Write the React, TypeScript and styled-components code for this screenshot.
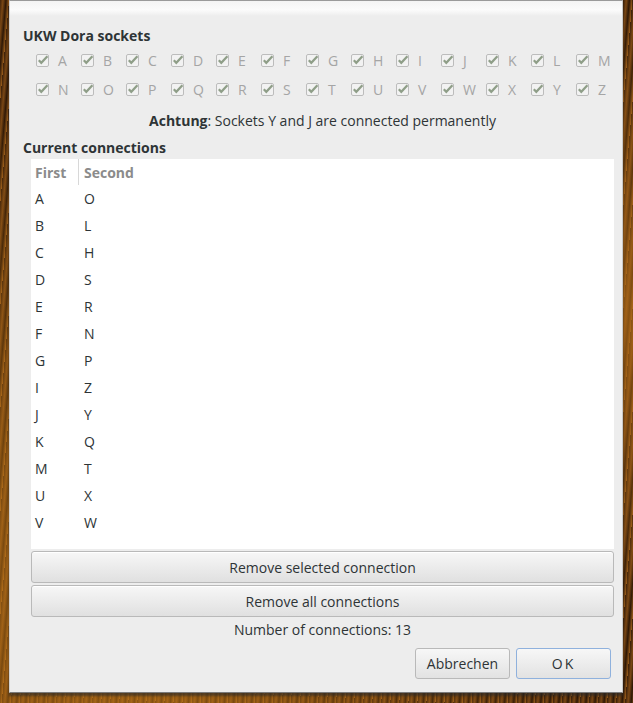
import { createGlobalStyle, styled } from "styled-components";

const GlobalStyle = createGlobalStyle`
    html, body {
        margin: 0;
        padding: 0;
    }
    body {
        font-family: "Open Sans", "DejaVu Sans", sans-serif;
        font-size: 14px;
        color: #2e3436;
    }
`;

const Desktop = styled.div`
    width: 633px;
    height: 703px;
    box-sizing: border-box;
    padding: 0 10px 0 9px;
    overflow: hidden;
    background:
        radial-gradient(ellipse at 20% 85%, rgba(200, 125, 25, 0.7), transparent 60%),
        radial-gradient(ellipse at 95% 45%, rgba(180, 110, 25, 0.7), transparent 55%),
        repeating-linear-gradient(95deg, #3e220a 0px, #7a4714 3px, #2e1806 6px, #94591a 9px),
        #5a3410;
`;

const Dialog = styled.div`
    width: 614px;
    height: 693px;
    box-sizing: border-box;
    background: #ededed;
    border-top: 1px solid #9a9a9a;
    border-left: 1px solid #d0d0d0;
    border-right: 1px solid #c8c8c8;
    border-bottom: 1px solid #7a7a7a;
    box-shadow: 0 3px 2px rgba(40, 40, 40, 0.6);
    display: flex;
    flex-direction: column;
`;

const TopStrip = styled.div`
    height: 15px;
    background: linear-gradient(#f4f4f4, #fbfbfb 60%, #ededed);
`;

const Content = styled.div`
    padding: 0 8px 0 13px;
    display: flex;
    flex-direction: column;
`;

const SectionTitle = styled.div<{ $top: number }>`
    font-weight: bold;
    margin-top: ${(p) => p.$top}px;
    line-height: 18px;
`;

const SocketGrid = styled.div`
    display: grid;
    grid-template-columns: repeat(13, 45px);
    grid-auto-rows: 29px;
    margin: 1px 0 0 13px;
`;

const Socket = styled.label`
    display: flex;
    align-items: center;
    gap: 9px;
    color: #a5a5a5;
`;

const Box = styled.span`
    width: 13px;
    height: 13px;
    display: inline-flex;
`;

const Notice = styled.div`
    text-align: center;
    margin-top: 8px;
    line-height: 18px;
    padding-left: 8px;
    b {
        font-weight: bold;
    }
`;

const Inner = styled.div`
    margin-left: 8px;
    display: flex;
    flex-direction: column;
`;

const TreeView = styled.div`
    margin-top: 2px;
    height: 390px;
    background: #ffffff;
    display: flex;
    flex-direction: column;
`;

const HeaderRow = styled.div`
    display: flex;
    height: 26px;
    align-items: center;
    color: #8b8b8b;
    font-weight: bold;
`;

const HeaderCell = styled.div<{ $w?: number; $sep?: boolean }>`
    width: ${(p) => (p.$w ? `${p.$w}px` : "auto")};
    padding-left: ${(p) => (p.$sep ? 5 : 4)}px;
    box-sizing: border-box;
    height: 100%;
    display: flex;
    align-items: center;
    border-right: ${(p) => (p.$sep ? "none" : "1px solid #d8d8d8")};
`;

const Row = styled.div`
    display: flex;
    height: 27px;
    align-items: center;
    line-height: 18px;
`;

const Cell = styled.div<{ $w?: number }>`
    width: ${(p) => (p.$w ? `${p.$w}px` : "auto")};
    padding-left: 4px;
    box-sizing: border-box;
`;

const WideButton = styled.button<{ $top: number }>`
    margin-top: ${(p) => p.$top}px;
    height: 32px;
    border: 1px solid #b9b9b9;
    border-radius: 3px;
    background: linear-gradient(#f7f7f7, #e0e0e0);
    font-family: inherit;
    font-size: 14px;
    color: #2e3436;
    box-shadow: inset 0 1px 0 #ffffff;
`;

const Count = styled.div`
    text-align: center;
    margin-top: 4px;
    line-height: 18px;
`;

const ButtonBar = styled.div`
    display: flex;
    justify-content: flex-end;
    gap: 6px;
    margin-top: 9px;
    padding-right: 3px;
`;

const ActionButton = styled.button<{ $default?: boolean }>`
    width: 95px;
    height: 31px;
    border: 1px solid ${(p) => (p.$default ? "#8fb1dd" : "#b9b9b9")};
    border-radius: 3px;
    background: linear-gradient(#f7f7f7, #e2e2e2);
    font-family: inherit;
    font-size: 14px;
    color: #2e3436;
    letter-spacing: ${(p) => (p.$default ? "2px" : "0")};
`;

const letters = "ABCDEFGHIJKLMNOPQRSTUVWXYZ".split("");

const connections: [string, string][] = [
    ["A", "O"], ["B", "L"], ["C", "H"], ["D", "S"], ["E", "R"], ["F", "N"], ["G", "P"],
    ["I", "Z"], ["J", "Y"], ["K", "Q"], ["M", "T"], ["U", "X"], ["V", "W"],
];

function CheckIcon() {
    return (
        <svg width="13" height="13" viewBox="0 0 13 13">
            <rect x="0.5" y="0.5" width="12" height="12" rx="1.5" fill="#f2f2f2" stroke="#bcbcbc" />
            <path d="M2.8 6.2 L5.3 8.8 L11.4 2.2" fill="none" stroke="#8f9e88" strokeWidth="2.2" />
        </svg>
    );
}

function App() {
    return (
        <Desktop>
            <GlobalStyle />
            <Dialog>
                <TopStrip />
                <Content>
                    <SectionTitle $top={11}>UKW Dora sockets</SectionTitle>
                    <SocketGrid>
                        {letters.map((l) => (
                            <Socket key={l}>
                                <Box><CheckIcon /></Box>
                                {l}
                            </Socket>
                        ))}
                    </SocketGrid>
                    <Notice><b>Achtung</b>: Sockets Y and J are connected permanently</Notice>
                    <SectionTitle $top={9}>Current connections</SectionTitle>
                    <Inner>
                        <TreeView>
                            <HeaderRow>
                                <HeaderCell $w={48}>First</HeaderCell>
                                <HeaderCell $sep>Second</HeaderCell>
                            </HeaderRow>
                            {connections.map(([a, b]) => (
                                <Row key={a}>
                                    <Cell $w={49}>{a}</Cell>
                                    <Cell>{b}</Cell>
                                </Row>
                            ))}
                        </TreeView>
                        <WideButton $top={2}>Remove selected connection</WideButton>
                        <WideButton $top={2}>Remove all connections</WideButton>
                        <Count>Number of connections: 13</Count>
                        <ButtonBar>
                            <ActionButton>Abbrechen</ActionButton>
                            <ActionButton $default>OK</ActionButton>
                        </ButtonBar>
                    </Inner>
                </Content>
            </Dialog>
        </Desktop>
    );
}

export default App;
